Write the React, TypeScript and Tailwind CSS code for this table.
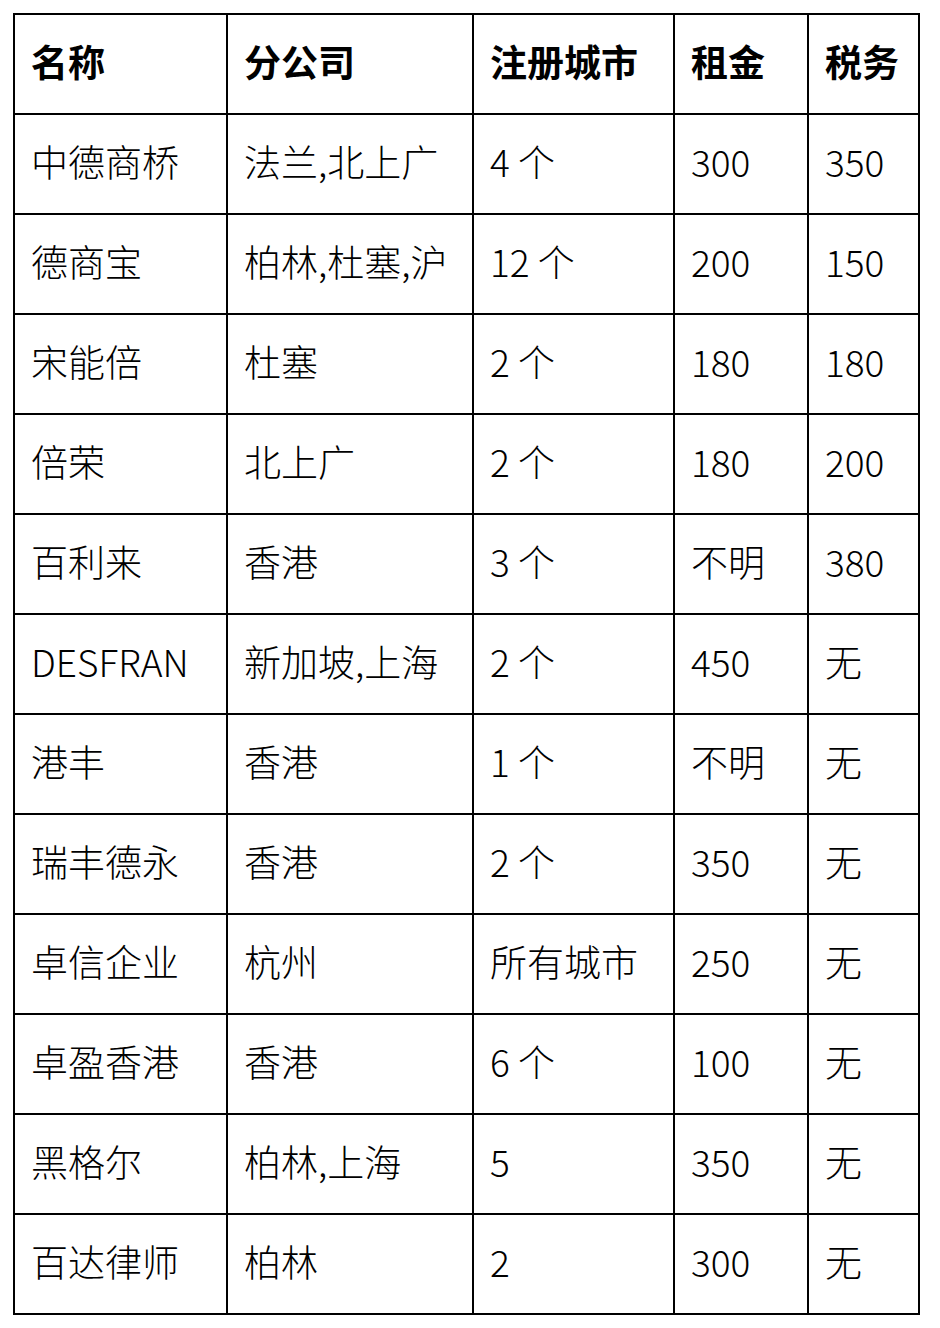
import React from "react";

const header = ["名称", "分公司", "注册城市", "租金", "税务"];
const rows: string[][] = [
  ["中德商桥", "法兰,北上广", "4 个", "300", "350"],
  ["德商宝", "柏林,杜塞,沪", "12 个", "200", "150"],
  ["宋能倍", "杜塞", "2 个", "180", "180"],
  ["倍荣", "北上广", "2 个", "180", "200"],
  ["百利来", "香港", "3 个", "不明", "380"],
  ["DESFRAN", "新加坡,上海", "2 个", "450", "无"],
  ["港丰", "香港", "1 个", "不明", "无"],
  ["瑞丰德永", "香港", "2 个", "350", "无"],
  ["卓信企业", "杭州", "所有城市", "250", "无"],
  ["卓盈香港", "香港", "6 个", "100", "无"],
  ["黑格尔", "柏林,上海", "5", "350", "无"],
  ["百达律师", "柏林", "2", "300", "无"],
];

export default function App() {
  return (
    <div
      className="w-[940px] h-[1328px] bg-white pt-[13px] pl-[13px] text-black"
      style={{ fontFamily: '"Noto Sans CJK SC", "Noto Sans", sans-serif' }}
    >
      <div className="grid w-[907px] grid-cols-[213px_246px_201px_134px_111px] border-l-2 border-t-2 border-black">
        {header.map((h, i) => (
          <div
            key={"h" + i}
            className="flex h-[100px] items-center whitespace-nowrap border-b-2 border-r-2 border-black pb-[6px] pl-[16px] text-[37px] font-bold leading-none"
          >
            {h}
          </div>
        ))}
        {rows.map((r, ri) =>
          r.map((c, ci) => (
            <div
              key={ri + "-" + ci}
              className="flex h-[100px] items-center whitespace-nowrap border-b-2 border-r-2 border-black pb-[6px] pl-[16px] text-[37px] font-light leading-none"
            >
              {c}
            </div>
          ))
        )}
      </div>
    </div>
  );
}
